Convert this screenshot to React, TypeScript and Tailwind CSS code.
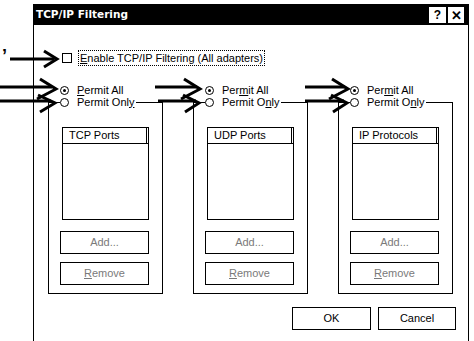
const groups = [
  { title: "TCP Ports", all: 0, only: 10 },
  { title: "UDP Ports", all: 3, only: 8 },
  { title: "IP Protocols", all: 3, only: 8 },
];

// label with one underlined access key
const Hot = ({ text, at }: { text: string; at: number }) => (
  <>
    {text.slice(0, at)}
    <u className="underline underline-offset-1">{text[at]}</u>
    {text.slice(at + 1)}
  </>
);

const Radio = ({ checked }: { checked?: boolean }) => (
  <span className="w-[9px] h-[9px] rounded-full border border-black bg-white flex items-center justify-center shrink-0">
    {checked && <span className="w-[3px] h-[3px] rounded-full bg-black" />}
  </span>
);

const Arrows = () => (
  <svg
    className="absolute left-0 top-0 pointer-events-none"
    width="474"
    height="341"
    viewBox="0 0 474 341"
    fill="none"
    stroke="black"
    strokeWidth="3"
  >
    <path d="M10 59 H54" />
    <path d="M44 51 L57 59 L44 67" />

    <path d="M0 87 H52" />
    <path d="M40 79 L56 89 L37 99" />
    <path d="M0 101 H51" />
    <path d="M38 95 L55 103 L40 112" />

    <path d="M155 87 H197" />
    <path d="M184 79 L200 89 L181 99" />
    <path d="M158 101 H196" />
    <path d="M183 95 L199 103 L185 112" />

    <path d="M305 87 H345" />
    <path d="M332 79 L348 89 L329 99" />
    <path d="M305 101 H344" />
    <path d="M331 95 L347 103 L333 112" />
  </svg>
);

const GroupBox = ({ title, all, only }: { title: string; all: number; only: number }) => (
  <div className="w-[115px] flex flex-col">
    <div className="h-[12px] pl-[12px] flex items-center gap-[8px]">
      <Radio checked />
      <span className="leading-none">
        <Hot text="Permit All" at={all} />
      </span>
    </div>
    <div className="relative mt-[6px] h-[192px] border border-black">
      <div className="absolute left-[11px] -top-[7px] h-[12px] bg-white pr-[2px] flex items-center gap-[8px]">
        <Radio />
        <span className="leading-none">
          <Hot text="Permit Only" at={only} />
        </span>
      </div>
      <div className="ml-[13px] mt-[24px] w-[87px] h-[93px] border border-black flex flex-col">
        <div className="h-[16px] flex border-b border-black">
          <div className="flex-1 border-r border-black pl-[6px] flex items-center">{title}</div>
          <div className="w-[1px]" />
        </div>
      </div>
      <div className="ml-[11px] mt-[11px] w-[89px] h-[23px] border border-black flex items-center justify-center text-[#7a7a7a]">
        Add...
      </div>
      <div className="ml-[11px] mt-[8px] w-[89px] h-[23px] border border-black flex items-center justify-center text-[#7a7a7a]">
        <Hot text="Remove" at={0} />
      </div>
    </div>
  </div>
);

export default function App() {
  return (
    <div className="relative w-[474px] h-[341px] overflow-hidden bg-white text-black text-[11px] font-['Liberation_Sans',Arial,sans-serif]">
      <div className="ml-[33px] mt-[4px] w-[436px] h-[360px] border border-black flex flex-col">
        <div className="h-[20px] bg-black flex items-center pl-[2px] pr-[4px]">
          <span className="flex-1 text-white font-bold text-[10.5px] font-['DejaVu_Sans',sans-serif]">
            TCP/IP Filtering
          </span>
          <div className="flex gap-[2px]">
            <span className="w-[17px] h-[16px] bg-white flex items-center justify-center font-bold text-[12px] leading-none">?</span>
            <span className="w-[16px] h-[16px] bg-white flex items-center justify-center font-bold text-[13px] leading-none">✕</span>
          </div>
        </div>

        <div className="mt-[25px] h-[16px] pl-[28px] flex items-center gap-[6px]">
          <span className="w-[10px] h-[10px] border border-black bg-white" />
          <span className="h-[16px] px-[1px] flex items-center border border-dotted border-black">
            <Hot text="Enable TCP/IP Filtering (All adapters)" at={0} />
          </span>
        </div>

        <div className="mt-[18px] pl-[14px] flex gap-[30px]">
          {groups.map((g) => (
            <GroupBox key={g.title} {...g} />
          ))}
        </div>

        <div className="mt-[13px] pr-[12px] flex justify-end gap-[7px]">
          <div className="w-[79px] h-[23px] border border-black flex items-center justify-center">OK</div>
          <div className="w-[78px] h-[23px] border border-black flex items-center justify-center">Cancel</div>
        </div>
      </div>

      <span className="absolute left-[2px] top-[47px] font-bold text-[18px] leading-none">’</span>
      <Arrows />
    </div>
  );
}
